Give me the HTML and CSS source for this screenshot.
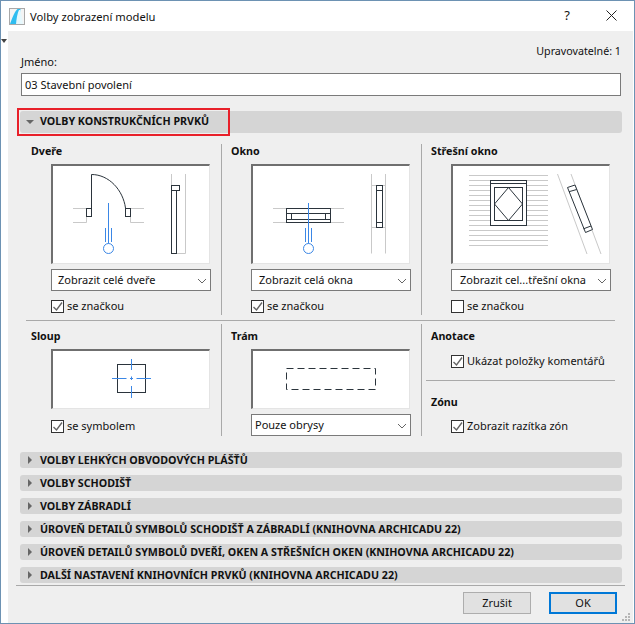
FILE: index.html
```html
<!DOCTYPE html>
<html lang="cs">
<head>
    <meta charset="UTF-8">
    <title>Volby zobrazení modelu</title>
    <link rel="stylesheet" href="styles.css">
</head>
<body>
<div class="window">
    <div class="titlebar">
        <svg class="app-icon" width="16" height="17" viewBox="0 0 16 17">
            <rect x="0.500" y="0.500" width="15" height="16" fill="#f4f4f4" stroke="#a8a8a8"/>
            <path d="M1 16 C3 10 6 3 8.500 1 L11.500 1 L11 16 Z" fill="#2fbdf0"/>
            <path d="M7 16 C7.500 10 8.500 5 10 2 L11.500 2 L14 16 Z" fill="#e6f8fd"/>
        </svg>
        <span class="title">Volby zobrazení modelu</span>
        <span class="help">?</span>
        <svg class="close" width="11" height="11" viewBox="0 0 11 11">
            <path d="M0.500 0.500 L10.500 10.500 M10.500 0.500 L0.500 10.500" stroke="#222" stroke-width="1" fill="none"/>
        </svg>
    </div>
    <div class="body">
        <div class="menu-arrow"></div>
        <div class="editable">Upravovatelné: 1</div>
        <div class="name-label">Jméno:</div>
        <div class="name-input">03 Stavební povolení</div>

        <div class="bar bar-open">
            <span class="tri-down"></span>VOLBY KONSTRUKČNÍCH PRVKŮ
            <div class="highlight"></div>
        </div>

        <div class="row row-top">
            <div class="cell">
                <div class="cell-title">Dveře</div>
                <div class="preview">
                    <svg width="157" height="97" viewBox="0 0 157 97">
                        <g fill="none" stroke="#c9c9c9">
                            <path d="M20 42.500 H33.500 M20 56.500 H33.500 V50 M77.500 42.500 H91 M77.500 56.500 H91 M77.500 50 V56.500"/>
                            <path d="M118.500 8 V20 M132.500 8 V87.500 H124"/>
                        </g>
                        <g fill="none" stroke="#2b343c">
                            <path d="M38.500 42 V8.500 C56 8.500 70 24 72.500 42"/>
                            <rect x="33.500" y="42.500" width="5" height="8"/>
                            <rect x="72.500" y="42.500" width="5" height="8"/>
                            <rect x="118.500" y="19.500" width="8" height="5"/>
                            <rect x="118.500" y="24.500" width="5" height="63"/>
                        </g>
                        <g fill="none" stroke="#3b87e6">
                            <path d="M55.500 37 V77.500 M52.500 62 V76 M58.500 62 V76"/>
                            <circle cx="55.500" cy="82.500" r="5"/>
                        </g>
                    </svg>
                </div>
                <div class="select">Zobrazit celé dveře<svg class="chev" width="10" height="6" viewBox="0 0 10 6"><path d="M1 1 L5 5 L9 1" fill="none" stroke="#666"/></svg></div>
                <label class="check"><span class="box"><svg width="11" height="11" viewBox="0 0 11 11"><path d="M1.500 6 L4.500 9 L10 1.500" fill="none" stroke="#666" stroke-width="1.400"/></svg></span>se značkou</label>
            </div>
            <div class="cell">
                <div class="cell-title">Okno</div>
                <div class="preview">
                    <svg width="157" height="97" viewBox="0 0 157 97">
                        <g fill="none" stroke="#c9c9c9">
                            <path d="M20 42.500 H91 M20 56.500 H91"/>
                            <path d="M118.500 8 V87.500 M132.500 8 V87.500 M118.500 19.500 H132.500 M118.500 61.500 H132.500"/>
                        </g>
                        <g fill="none" stroke="#2b343c">
                            <rect x="33.500" y="42.500" width="44" height="14"/>
                            <rect x="33.500" y="47.500" width="44" height="6"/>
                            <path d="M38.500 47.500 V53.500 M72.500 47.500 V53.500"/>
                            <rect x="123.500" y="19.500" width="6" height="42" fill="#fff"/>
                            <path d="M123.500 24.500 H129.500 M123.500 56.500 H129.500"/>
                        </g>
                        <g fill="none" stroke="#3b87e6">
                            <path d="M55.500 37 V77.500 M52.500 62 V76 M58.500 62 V76"/>
                            <circle cx="55.500" cy="82.500" r="5"/>
                        </g>
                    </svg>
                </div>
                <div class="select select-window">Zobrazit celá okna<svg class="chev" width="10" height="6" viewBox="0 0 10 6"><path d="M1 1 L5 5 L9 1" fill="none" stroke="#666"/></svg></div>
                <label class="check"><span class="box"><svg width="11" height="11" viewBox="0 0 11 11"><path d="M1.500 6 L4.500 9 L10 1.500" fill="none" stroke="#666" stroke-width="1.400"/></svg></span>se značkou</label>
            </div>
            <div class="cell">
                <div class="cell-title">Střešní okno</div>
                <div class="preview">
                    <svg width="157" height="97" viewBox="0 0 157 97">
                        <path fill="none" stroke="#c9c9c9" d="M16 9.500 H95 M16 14.500 H95 M16 19.500 H95 M16 24.500 H95 M16 29.500 H95 M16 34.500 H95 M16 39.500 H95 M16 44.500 H95 M16 49.500 H95 M16 54.500 H95 M16 59.500 H95 M16 64.500 H95 M16 69.500 H95 M16 74.500 H95 M16 79.500 H95"/>
                        <path fill="none" stroke="#c9c9c9" d="M104.500 8 L134 88 M118 8 L148 88"/>
                        <g fill="none" stroke="#2b343c">
                            <rect x="37.500" y="14.500" width="36" height="45" fill="#fff"/>
                            <path d="M37.500 17.500 H73.500"/>
                            <rect x="41.500" y="21.500" width="28" height="33"/>
                            <path d="M55.500 21.500 L69.500 38 L55.500 54.500 L41.500 38 Z"/>
                            <path d="M114.500 21.500 L122 19 L139.500 63.500 L132.500 66.500 Z" fill="#fff"/>
                            <path d="M116 25.700 L123.700 23.500 M130.500 62.800 L138 60"/>
                        </g>
                    </svg>
                </div>
                <div class="select select-roof">Zobrazit cel...třešní okna<svg class="chev" width="10" height="6" viewBox="0 0 10 6"><path d="M1 1 L5 5 L9 1" fill="none" stroke="#666"/></svg></div>
                <label class="check"><span class="box"></span>se značkou</label>
            </div>
        </div>

        <div class="rule"></div>

        <div class="row row-bottom">
            <div class="cell">
                <div class="cell-title">Sloup</div>
                <div class="preview preview-low">
                    <svg width="157" height="57" viewBox="0 0 157 57">
                        <rect x="64.500" y="13.500" width="28" height="28" fill="none" stroke="#2b343c"/>
                        <path fill="none" stroke="#3b87e6" d="M78.500 8 V19 M78.500 25.500 V29 M78.500 35 V47 M59 27.500 H73.500 M77 27.500 H80 M83.500 27.500 H98"/>
                    </svg>
                </div>
                <label class="check check-low"><span class="box"><svg width="11" height="11" viewBox="0 0 11 11"><path d="M1.500 6 L4.500 9 L10 1.500" fill="none" stroke="#666" stroke-width="1.400"/></svg></span>se symbolem</label>
            </div>
            <div class="cell">
                <div class="cell-title">Trám</div>
                <div class="preview preview-low">
                    <svg width="157" height="57" viewBox="0 0 157 57">
                        <rect x="33.500" y="17.500" width="89" height="21" fill="none" stroke="#2b343c" stroke-dasharray="7 4"/>
                    </svg>
                </div>
                <div class="select select-low">Pouze obrysy<svg class="chev" width="10" height="6" viewBox="0 0 10 6"><path d="M1 1 L5 5 L9 1" fill="none" stroke="#666"/></svg></div>
            </div>
            <div class="cell">
                <div class="cell-title">Anotace</div>
                <label class="check check-note"><span class="box"><svg width="11" height="11" viewBox="0 0 11 11"><path d="M1.500 6 L4.500 9 L10 1.500" fill="none" stroke="#666" stroke-width="1.400"/></svg></span>Ukázat položky komentářů</label>
                <div class="rule rule-sub"></div>
                <div class="cell-title">Zónu</div>
                <label class="check check-low"><span class="box"><svg width="11" height="11" viewBox="0 0 11 11"><path d="M1.500 6 L4.500 9 L10 1.500" fill="none" stroke="#666" stroke-width="1.400"/></svg></span>Zobrazit razítka zón</label>
            </div>
        </div>

        <div class="bars">
            <div class="bar"><span class="tri-right"></span>VOLBY LEHKÝCH OBVODOVÝCH PLÁŠŤŮ</div>
            <div class="bar"><span class="tri-right"></span>VOLBY SCHODIŠŤ</div>
            <div class="bar"><span class="tri-right"></span>VOLBY ZÁBRADLÍ</div>
            <div class="bar"><span class="tri-right"></span>ÚROVEŇ DETAILŮ SYMBOLŮ SCHODIŠŤ A ZÁBRADLÍ (KNIHOVNA ARCHICADU 22)</div>
            <div class="bar"><span class="tri-right"></span>ÚROVEŇ DETAILŮ SYMBOLŮ DVEŘÍ, OKEN A STŘEŠNÍCH OKEN (KNIHOVNA ARCHICADU 22)</div>
            <div class="bar"><span class="tri-right"></span>DALŠÍ NASTAVENÍ KNIHOVNÍCH PRVKŮ (KNIHOVNA ARCHICADU 22)</div>
        </div>

        <div class="footer">
            <div class="btn">Zrušit</div>
            <div class="btn btn-default">OK</div>
        </div>
        <svg class="grip" width="9" height="9" viewBox="0 0 9 9" fill="#b5b5b5">
            <rect x="6" y="0" width="2" height="2"/>
            <rect x="3" y="3" width="2" height="2"/><rect x="6" y="3" width="2" height="2"/>
            <rect x="0" y="6" width="2" height="2"/><rect x="3" y="6" width="2" height="2"/><rect x="6" y="6" width="2" height="2"/>
        </svg>
    </div>
</div>
</body>
</html>
```

FILE: styles.css
```css
html, body {
    margin: 0;
    padding: 0;
}

body {
    font-family: "Noto Sans", "Open Sans", sans-serif;
    font-size: 11px;
    color: #111;
}

.window {
    width: 635px;
    height: 624px;
    box-sizing: border-box;
    border: 1px solid #6d92b3;
    background: #fff;
    display: flex;
    flex-direction: column;
}

.titlebar {
    height: 30px;
    display: flex;
    align-items: center;
    flex: none;
}

.app-icon {
    margin-left: 8px;
}

.title {
    margin-left: 5px;
    font-size: 11.2px;
    flex: 1;
}

.help {
    font-size: 13px;
    margin: 0 36px 2px 0;
}

.close {
    margin: 0 17px 2px 0;
}

.body {
    position: relative;
    flex: 1;
    margin: 0 1px 0 7px;
    background: #efefef;
    padding: 0 11px 0 13px;
    box-sizing: border-box;
}

.menu-arrow {
    position: absolute;
    left: -7px;
    top: 8px;
    border-left: 3px solid transparent;
    border-right: 3px solid transparent;
    border-top: 4px solid #444;
}

.editable {
    text-align: right;
    padding: 13px 1px 0 0;
    height: 14px;
    line-height: 14px;
    font-size: 10.7px;
}

.name-label {
    margin-top: -3px;
    height: 14px;
    line-height: 14px;
}

.name-input {
    margin: 4px 1px 0 0;
    height: 23px;
    box-sizing: border-box;
    border: 1px solid #7a7a7a;
    background: #fff;
    padding-left: 3px;
    line-height: 21px;
}

.bar {
    position: relative;
    height: 16px;
    line-height: 16px;
    background: #d5d5d5;
    border-radius: 3px;
    font-weight: 700;
    font-size: 10.7px;
    padding-left: 20px;
    margin-left: -1px;
    white-space: nowrap;
}

.bar-open {
    height: 22px;
    line-height: 21px;
    margin-top: 15px;
}

.highlight {
    position: absolute;
    left: -3px;
    top: -3px;
    width: 209px;
    height: 24px;
    border: 2px solid #e8202a;
}

.tri-down {
    position: absolute;
    left: 6px;
    top: 9px;
    border-left: 4px solid transparent;
    border-right: 4px solid transparent;
    border-top: 4px solid #666;
}

.tri-right {
    position: absolute;
    left: 8px;
    top: 4px;
    border-top: 4px solid transparent;
    border-bottom: 4px solid transparent;
    border-left: 4px solid #666;
}

.row {
    display: grid;
    grid-template-columns: 200px 200px 200px;
}

.row-top {
    margin-top: 11px;
    height: 171px;
}

.row-bottom {
    margin-top: 3px;
    height: 110px;
}

.cell {
    border-left: 1px solid #a9a9a9;
    padding-left: 9px;
    min-width: 0;
}

.cell:first-child {
    border-left: 1px solid transparent;
}

.cell-title {
    font-weight: 700;
    font-size: 10.7px;
    height: 14px;
    line-height: 14px;
}

.row-bottom .cell-title {
    padding-top: 5px;
}

.preview {
    margin: 6px 0 0 20px;
    width: 159px;
    height: 100px;
    box-sizing: border-box;
    border: 1px solid #e4e4e4;
    border-top: 2px solid #6f6f6f;
    border-left: 2px solid #6f6f6f;
    background: #fff;
}

.preview svg {
    display: block;
}

.preview-low {
    height: 60px;
}

.select {
    position: relative;
    margin: 5px 0 0 20px;
    width: 160px;
    height: 22px;
    box-sizing: border-box;
    border: 1px solid #7a7a7a;
    background: #fff;
    line-height: 20px;
    padding-left: 6px;
}

.select-window {
    padding-left: 7px;
}

.select-roof {
    padding-left: 8px;
}

.select-low {
    padding-left: 3px;
}

.chev {
    position: absolute;
    right: 3px;
    top: 8px;
}

.check {
    display: flex;
    align-items: center;
    height: 14px;
    line-height: 14px;
    margin: 8px 0 0 20px;
}

.check-low {
    margin-top: 10px;
}

.check-note {
    margin-top: 11px;
}

.box {
    width: 11px;
    height: 11px;
    border: 1px solid #333;
    background: #fff;
    margin-right: 3px;
    flex: none;
    display: block;
}

.box svg {
    display: block;
}

.rule {
    height: 1px;
    background: #a9a9a9;
    margin: 5px 7px 0 5px;
}

.rule-sub {
    margin: 12px 6px 9px -5px;
}

.bars {
    display: flex;
    flex-direction: column;
    gap: 7px;
    margin-top: 18px;
}

.footer {
    display: flex;
    justify-content: flex-end;
    gap: 18px;
    margin: 2px -3px 0 -5px;
    border-top: 1px solid #a9a9a9;
    padding: 6px 8px 0 0;
}

.btn {
    width: 68px;
    height: 22px;
    box-sizing: border-box;
    border: 1px solid #adadad;
    background: #e1e1e1;
    text-align: center;
    line-height: 20px;
}

.btn-default {
    border: 2px solid #0078d7;
    line-height: 18px;
}

.grip {
    position: absolute;
    right: 2px;
    bottom: 1px;
}
```
